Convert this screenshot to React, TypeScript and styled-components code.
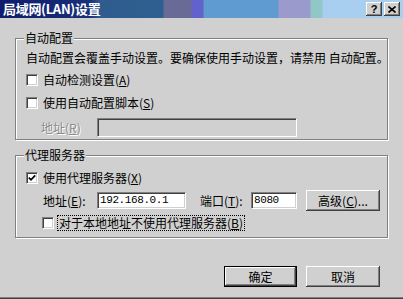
import styled, { createGlobalStyle } from "styled-components";

const GlobalStyle = createGlobalStyle`
  html, body {
    margin: 0;
    padding: 0;
    background: #d0d0d0;
  }
  body {
    font-family: "Noto Sans CJK SC", "Liberation Sans", sans-serif;
    font-size: 12px;
    color: #000;
  }
`;

const Window = styled.div`
  width: 403px;
  height: 299px;
  box-sizing: border-box;
  background: #d0d0d0;
  display: flex;
  flex-direction: column;
  box-shadow: inset 0 -1px #404040, inset 0 -2px #808080;
`;

const TitleBar = styled.div`
  height: 18px;
  flex: none;
  display: flex;
  align-items: center;
  justify-content: space-between;
  padding: 0 3px 0 3px;
  background: linear-gradient(
    to right,
    #0e1d6c 0px,
    #1a2f7a 90px,
    #2e5c8e 100px,
    #2f5f90 163px,
    #6a6a96 164px,
    #6a6a96 191px,
    #6262cc 192px,
    #6262cc 203px,
    #5f9ad0 204px,
    #5f9ad0 278px,
    #9a9acc 279px,
    #9a9acc 310px,
    #90c8c8 311px,
    #90c8c8 322px,
    #a8cef0 323px,
    #a8cef0 403px
  );
`;

const Title = styled.span`
  color: #fff;
  font-weight: 700;
  font-size: 13px;
  line-height: 18px;
  letter-spacing: -0.3px;
`;

const CaptionButtons = styled.div`
  display: flex;
  gap: 2px;
`;

const CaptionButton = styled.div`
  width: 16px;
  height: 14px;
  box-sizing: border-box;
  background: #d0d0d0;
  display: flex;
  align-items: center;
  justify-content: center;
  font-family: "Liberation Sans", sans-serif;
  font-weight: 700;
  font-size: 11px;
  line-height: 1;
  box-shadow: inset -1px -1px #404040, inset 1px 1px #fff,
    inset -2px -2px #808080;
`;

const Body = styled.div`
  flex: 1;
  display: flex;
  flex-direction: column;
  padding: 13px 15px 0 15px;
`;

const Group = styled.fieldset<{ $gap: number; $pb: number }>`
  margin: 0 0 ${(p) => p.$gap}px 0;
  padding: 0 0 ${(p) => p.$pb}px 10px;
  border: 1px solid #808080;
  box-shadow: inset 1px 1px #fff, 1px 1px #fff;
  min-width: 0;
  display: flex;
  flex-direction: column;
`;

const Legend = styled.legend`
  padding: 0 1px;
  margin-left: -2px;
  line-height: 14px;
  background: #d0d0d0;
`;

const Description = styled.div`
  line-height: 16px;
  margin-top: 5px;
  white-space: nowrap;
`;

const Row = styled.div<{ $top: number; $indent?: number; $h?: number }>`
  display: flex;
  align-items: center;
  height: ${(p) => p.$h ?? 16}px;
  margin-top: ${(p) => p.$top}px;
  padding-left: ${(p) => p.$indent ?? 0}px;
  white-space: nowrap;
`;

const Box = styled.span`
  width: 12px;
  height: 12px;
  box-sizing: border-box;
  flex: none;
  background: #fff;
  border: 1px solid;
  border-color: #808080 #fff #fff #808080;
  box-shadow: inset 1px 1px #404040, inset -1px -1px #d0d0d0;
  display: flex;
  align-items: center;
  justify-content: center;
  margin-right: 5px;
`;

const Caption = styled.span<{ $focus?: boolean }>`
  line-height: 14px;
  padding: 0 1px;
  margin-left: -1px;
  outline: ${(p) => (p.$focus ? "1px dotted #000" : "none")};
`;

const FieldLabel = styled.span<{ $w: number; $disabled?: boolean }>`
  width: ${(p) => p.$w}px;
  flex: none;
  color: ${(p) => (p.$disabled ? "#8a8a8a" : "#000")};
  text-shadow: ${(p) => (p.$disabled ? "1px 1px #fff" : "none")};
`;

const Field = styled.div<{ $w: number; $h: number; $disabled?: boolean }>`
  width: ${(p) => p.$w}px;
  height: ${(p) => p.$h}px;
  box-sizing: border-box;
  flex: none;
  background: ${(p) => (p.$disabled ? "#d0d0d0" : "#fff")};
  border: 1px solid;
  border-color: #808080 #fff #fff #808080;
  box-shadow: inset 1px 1px #404040, inset -1px -1px #d0d0d0;
  padding: 0 2px;
  font-family: "Liberation Mono", monospace;
  font-size: 11px;
  letter-spacing: -0.4px;
  line-height: ${(p) => p.$h - 2}px;
`;

const Button = styled.div<{ $w: number; $default?: boolean; $ml?: number }>`
  width: ${(p) => p.$w}px;
  height: 21px;
  box-sizing: border-box;
  flex: none;
  margin-left: ${(p) => p.$ml ?? 0}px;
  display: flex;
  align-items: center;
  justify-content: center;
  background: #d0d0d0;
  border: ${(p) => (p.$default ? "1px solid #000" : "none")};
  box-shadow: inset -1px -1px #404040, inset 1px 1px #fff,
    inset -2px -2px #808080;
  line-height: 14px;
`;

const Footer = styled.div`
  display: flex;
  justify-content: flex-end;
  gap: 9px;
  padding-right: 8px;
  margin-top: 28px;
`;

const Check = () => (
  <svg width="8" height="8" viewBox="0 0 8 8">
    <polyline
      points="0.8,3.6 3,5.8 7.2,1.4"
      fill="none"
      stroke="#000"
      strokeWidth="1.7"
    />
  </svg>
);

const CloseGlyph = () => (
  <svg width="8" height="7" viewBox="0 0 8 7">
    <path d="M0.5 0.5 L7.5 6.5 M7.5 0.5 L0.5 6.5" stroke="#000" strokeWidth="1.6" />
  </svg>
);

export default function App() {
  return (
    <>
      <GlobalStyle />
      <Window>
        <TitleBar>
          <Title>局域网(LAN)设置</Title>
          <CaptionButtons>
            <CaptionButton>?</CaptionButton>
            <CaptionButton>
              <CloseGlyph />
            </CaptionButton>
          </CaptionButtons>
        </TitleBar>
        <Body>
          <Group $gap={8} $pb={2}>
            <Legend>自动配置</Legend>
            <Description>
              自动配置会覆盖手动设置。要确保使用手动设置，请禁用 自动配置。
            </Description>
            <Row $top={6}>
              <Box />
              <Caption>
                自动检测设置(<u>A</u>)
              </Caption>
            </Row>
            <Row $top={7}>
              <Box />
              <Caption>
                使用自动配置脚本(<u>S</u>)
              </Caption>
            </Row>
            <Row $top={7} $indent={15} $h={19}>
              <FieldLabel $w={56} $disabled>
                地址(<u>R</u>)
              </FieldLabel>
              <Field $w={200} $h={19} $disabled />
            </Row>
          </Group>
          <Group $gap={0} $pb={6}>
            <Legend>代理服务器</Legend>
            <Row $top={8}>
              <Box>
                <Check />
              </Box>
              <Caption>
                使用代理服务器(<u>X</u>)
              </Caption>
            </Row>
            <Row $top={4} $indent={17} $h={21}>
              <FieldLabel $w={54}>
                地址(<u>E</u>):
              </FieldLabel>
              <Field $w={89} $h={17}>
                192.168.0.1
              </Field>
              <FieldLabel $w={51} style={{ marginLeft: 14 }}>
                端口(<u>T</u>):
              </FieldLabel>
              <Field $w={46} $h={17}>
                8080
              </Field>
              <Button $w={74} $ml={9}>
                高级(<u>C</u>)...
              </Button>
            </Row>
            <Row $top={4} $indent={16}>
              <Box />
              <Caption $focus>
                对于本地地址不使用代理服务器(<u>B</u>)
              </Caption>
            </Row>
          </Group>
          <Footer>
            <Button $w={73} $default>
              确定
            </Button>
            <Button $w={74}>取消</Button>
          </Footer>
        </Body>
      </Window>
    </>
  );
}
